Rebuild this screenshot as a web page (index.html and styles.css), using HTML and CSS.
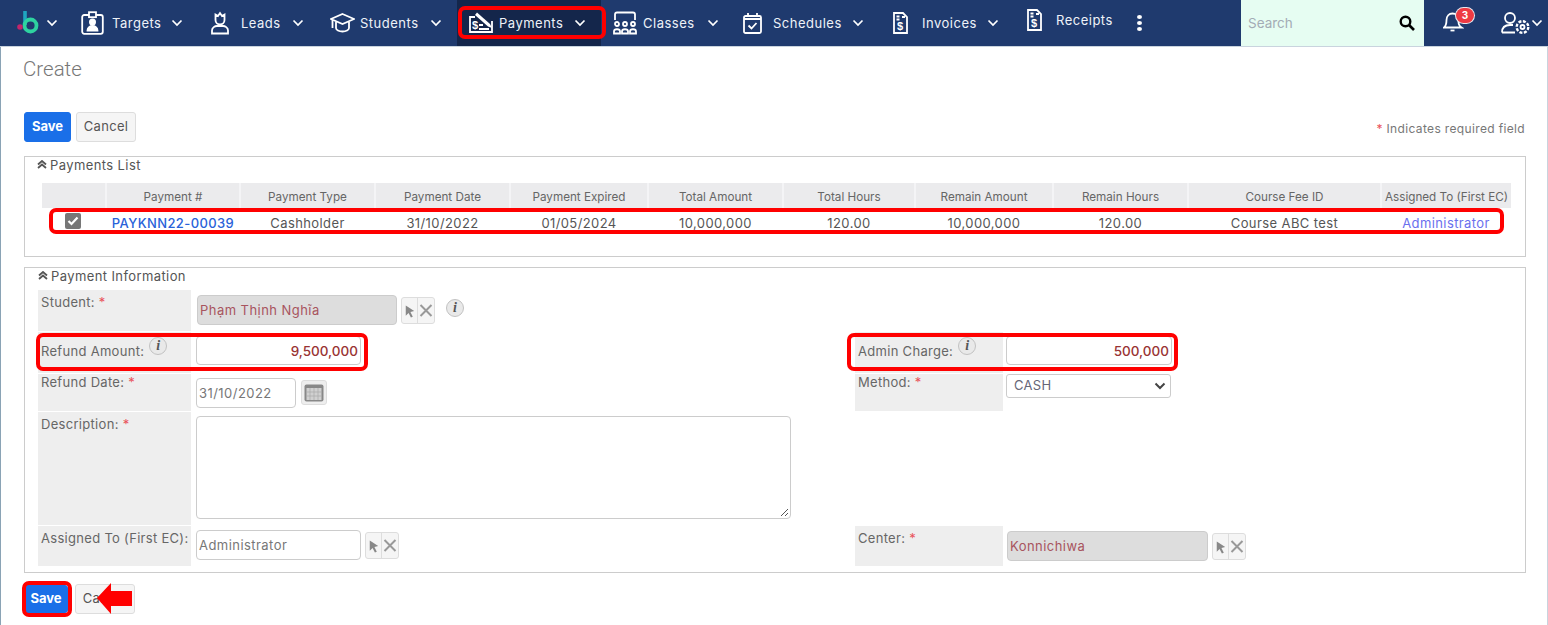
FILE: index.html
```html
<!DOCTYPE html>
<html lang="en">
<head>
    <meta charset="UTF-8">
    <title>Create Payment</title>
    <link rel="stylesheet" href="styles.css">
</head>
<body>
    <!-- top menu -->
    <header class="topbar">
        <div class="nav-cell nav-logo">
            <svg class="logo" width="22" height="24" viewBox="0 0 22 24"><path d="M8 1v14" stroke="#1fa5c0" stroke-width="3.600" fill="none"/><circle cx="13.500" cy="15.500" r="6" stroke="#2ed3a0" stroke-width="3.800" fill="none"/><circle cx="3" cy="17" r="2.800" fill="#c2256b"/></svg>
            <svg class="chev" viewBox="0 0 12 8"><path d="M1.500 1.500 6 6l4.500-4.500"/></svg>
        </div>
        <a class="nav-cell nav-targets">
            <svg class="ico" width="23" height="24" viewBox="0 0 23 24"><rect x="1.200" y="4" width="20.600" height="18.800" rx="2"/><rect x="8" y="1.200" width="7" height="5" fill="#1f3a6e"/><circle cx="11.500" cy="11" r="2.600" fill="#fff"/><path d="M6.500 19.500c0-6 10-6 10 0z" fill="#fff"/></svg>
            <span class="lbl">Targets</span>
            <svg class="chev" viewBox="0 0 12 8"><path d="M1.500 1.500 6 6l4.500-4.500"/></svg>
        </a>
        <a class="nav-cell nav-leads">
            <svg class="ico" width="20" height="24" viewBox="0 0 20 24"><path d="M5.500 3.500 8 5l2-3 2 3 2.500-1.500V9c0 6-9 6-9 0z"/><path d="M2 22.500v-3c0-3 3-4.500 5-4.500h6c2 0 5 1.500 5 4.500v3z"/></svg>
            <span class="lbl">Leads</span>
            <svg class="chev" viewBox="0 0 12 8"><path d="M1.500 1.500 6 6l4.500-4.500"/></svg>
        </a>
        <a class="nav-cell nav-students">
            <svg class="ico" width="25" height="22" viewBox="0 0 25 22"><path d="M12.500 2 24 7l-11.500 5L1 7z"/><path d="M6 10v6c0 2 3 3.500 6.500 3.500s6.500-1.500 6.500-3.500v-6"/><path d="M2.500 8v8"/></svg>
            <span class="lbl">Students</span>
            <svg class="chev" viewBox="0 0 12 8"><path d="M1.500 1.500 6 6l4.500-4.500"/></svg>
        </a>
        <a class="nav-cell nav-payments">
            <svg class="ico" width="24" height="24" viewBox="0 0 24 24"><path d="M6 6H1v15h22V10"/><path d="M8 1.500l13 11.500 2 4-4-1.500L6 4z" fill="#fff" stroke="none"/><text class="ico-sym" x="3" y="18">$</text><path d="M10 14h4M10 18h10"/></svg>
            <span class="lbl">Payments</span>
            <svg class="chev" viewBox="0 0 12 8"><path d="M1.500 1.500 6 6l4.500-4.500"/></svg>
        </a>
        <a class="nav-cell nav-classes">
            <svg class="ico" width="24" height="24" viewBox="0 0 24 24"><path d="M2 9V3.500Q2 1.500 4 1.500h16q2 0 2 2V9"/><circle cx="4" cy="13" r="2"/><circle cx="12" cy="13" r="2"/><circle cx="20" cy="13" r="2"/><path d="M1 22.500v-2c0-3 6-3 6 0v2zM9 22.500v-2c0-3 6-3 6 0v2zM17 22.500v-2c0-3 6-3 6 0v2z"/></svg>
            <span class="lbl">Classes</span>
            <svg class="chev" viewBox="0 0 12 8"><path d="M1.500 1.500 6 6l4.500-4.500"/></svg>
        </a>
        <a class="nav-cell nav-schedules">
            <svg class="ico" width="19" height="22" viewBox="0 0 19 22"><rect x="1" y="4" width="17" height="17" rx="1.500"/><path d="M5 1v4M14 1v4M1 7h17"/><path d="M5.500 13.500l3 3 5-5.500"/></svg>
            <span class="lbl">Schedules</span>
            <svg class="chev" viewBox="0 0 12 8"><path d="M1.500 1.500 6 6l4.500-4.500"/></svg>
        </a>
        <a class="nav-cell nav-invoices">
            <svg class="ico" width="15" height="22" viewBox="0 0 15 22"><path d="M1 1h9l4 4v16H1z"/><path d="M3.500 4.500h3M3.500 7.500h3M9 5h3"/><text class="ico-sym" x="4" y="18">$</text></svg>
            <span class="lbl">Invoices</span>
            <svg class="chev" viewBox="0 0 12 8"><path d="M1.500 1.500 6 6l4.500-4.500"/></svg>
        </a>
        <a class="nav-cell nav-receipts">
            <svg class="ico" width="15" height="22" viewBox="0 0 15 22"><path d="M1 1h9l4 4v16H1z"/><path d="M3.500 4.500h3M3.500 7.500h3M9 5h3"/><text class="ico-sym" x="4" y="18">$</text></svg>
            <span class="lbl">Receipts</span>
        </a>
        <div class="nav-cell nav-more"><span class="dot"></span><span class="dot"></span><span class="dot"></span></div>
        <div class="search">
            <span class="search-text">Search</span>
            <svg width="16" height="16" viewBox="0 0 16 16"><circle cx="6.500" cy="6.500" r="4.800" stroke="#000" stroke-width="2.400" fill="none"/><path d="M10 10l5 5" stroke="#000" stroke-width="2.600"/></svg>
        </div>
        <div class="nav-cell nav-bell">
            <svg class="ico" width="21" height="24" viewBox="0 0 21 24"><path d="M1 18.500c2.500-2 2.500-4 2.500-7.500 0-4 2.500-6.500 6-6.500s6 2.500 6 6.500c0 3.500 0 5.500 3 7.500z"/><path d="M7.500 21.500h4"/></svg>
            <span class="badge">3</span>
        </div>
        <div class="nav-cell nav-user">
            <svg class="ico ico-user" width="29" height="24" viewBox="0 0 29 24"><circle cx="9" cy="7" r="5"/><path d="M1 21.500c0-5 3-7.500 8-7.500h3M1 21.500h13"/><circle cx="21.500" cy="16" r="2"/><circle cx="21.500" cy="16" r="5.800" stroke-dasharray="3 1.500" stroke-width="2.400"/></svg>
            <svg class="chev" viewBox="0 0 12 8"><path d="M1.500 1.500 6 6l4.500-4.500"/></svg>
        </div>
    </header>

    <main class="content">
        <h1 class="page-title">Create</h1>

        <div class="toolbar">
            <button class="btn btn-save" type="button">Save</button>
            <button class="btn" type="button">Cancel</button>
            <span class="req-note"><span class="req">*</span> Indicates required field</span>
        </div>

        <section class="panel panel-list">
            <div class="panel-title">
                <svg class="fold" viewBox="0 0 10 9"><path d="M1 4.500 5 1l4 3.500M1 8l4-3.500L9 8"/></svg>
                Payments List
            </div>
            <table class="tabela">
                <colgroup>
                    <col class="c64"><col class="c134"><col class="c135"><col class="c135"><col class="c138"><col class="c135"><col class="c132"><col class="c138"><col class="c135"><col class="c193"><col class="c130">
                </colgroup>
                <thead>
                    <tr>
                        <th></th>
                        <th>Payment #</th>
                        <th>Payment Type</th>
                        <th>Payment Date</th>
                        <th>Payment Expired</th>
                        <th>Total Amount</th>
                        <th>Total Hours</th>
                        <th>Remain Amount</th>
                        <th>Remain Hours</th>
                        <th>Course Fee ID</th>
                        <th>Assigned To (First EC)</th>
                    </tr>
                </thead>
                <tbody>
                    <tr>
                        <td><span class="check"><svg width="12" height="10" viewBox="0 0 12 10"><path d="M1.500 5l3 3 6-6.500" stroke="#fff" stroke-width="2.200" fill="none"/></svg></span></td>
                        <td><a class="pay-link">PAYKNN22-00039</a></td>
                        <td>Cashholder</td>
                        <td>31/10/2022</td>
                        <td>01/05/2024</td>
                        <td>10,000,000</td>
                        <td>120.00</td>
                        <td>10,000,000</td>
                        <td>120.00</td>
                        <td>Course ABC test</td>
                        <td><a class="user-link">Administrator</a></td>
                    </tr>
                </tbody>
            </table>
        </section>

        <section class="panel panel-info">
            <div class="panel-title">
                <svg class="fold" viewBox="0 0 10 9"><path d="M1 4.500 5 1l4 3.500M1 8l4-3.500L9 8"/></svg>
                Payment Information
            </div>
            <div class="form-grid">
                <div class="lb">Student: <span class="req">*</span></div>
                <div class="fd fd-student">
                    <div class="inp inp-off w200">Phạm Thịnh Nghĩa</div>
                    <div class="pick">
                        <svg width="15" height="16" viewBox="0 0 16 16"><path d="M4 2l9 6-4 1 2.500 5-2 1L7 10l-3 3z" fill="#888"/></svg>
                        <svg width="16" height="16" viewBox="0 0 16 16"><path d="M2.500 2.500l11 11M13.500 2.500l-11 11" stroke="#999" stroke-width="2"/></svg>
                    </div>
                    <span class="info info-student">i</span>
                </div>
                <div class="lb"></div>
                <div class="fd"></div>

                <div class="lb lb-mid">Refund Amount:<span class="info info-label">i</span></div>
                <div class="fd fd-top">
                    <div class="inp inp-num w165">9,500,000</div>
                </div>
                <div class="lb lb-mid">Admin Charge:<span class="info info-label">i</span></div>
                <div class="fd fd-right fd-top">
                    <div class="inp inp-num w166">500,000</div>
                </div>

                <div class="lb lb-tight">Refund Date: <span class="req">*</span></div>
                <div class="fd fd-date">
                    <div class="inp w100">31/10/2022</div>
                    <span class="cal">
                        <svg width="20" height="18" viewBox="0 0 20 18"><rect x="0.500" y="0.500" width="19" height="17" rx="2" fill="#888"/><rect x="2.500" y="4" width="15" height="12" fill="#d0d0d0"/><path d="M6 4v12M10 4v12M14 4v12M2.500 8h15M2.500 12h15" stroke="#aaa" stroke-width="0.700"/></svg>
                    </span>
                </div>
                <div class="lb lb-tight">Method: <span class="req">*</span></div>
                <div class="fd fd-right fd-select">
                    <div class="select">CASH
                        <svg class="select-arrow" viewBox="0 0 12 8"><path d="M1.500 1.500 6 6l4.500-4.500"/></svg>
                    </div>
                </div>

                <div class="lb">Description: <span class="req">*</span></div>
                <div class="fd fd-desc">
                    <div class="textarea">
                        <svg class="grip" width="10" height="10" viewBox="0 0 10 10"><path d="M9 2 2 9M9 6 6 9" stroke="#555" stroke-width="1"/></svg>
                    </div>
                </div>
                <div class="blank"></div>
                <div class="blank"></div>

                <div class="lb">Assigned To (First EC):</div>
                <div class="fd fd-assign">
                    <div class="inp w165">Administrator</div>
                    <div class="pick pick-near">
                        <svg width="15" height="16" viewBox="0 0 16 16"><path d="M4 2l9 6-4 1 2.500 5-2 1L7 10l-3 3z" fill="#888"/></svg>
                        <svg width="16" height="16" viewBox="0 0 16 16"><path d="M2.500 2.500l11 11M13.500 2.500l-11 11" stroke="#999" stroke-width="2"/></svg>
                    </div>
                </div>
                <div class="lb">Center: <span class="req">*</span></div>
                <div class="fd fd-right fd-center">
                    <div class="inp inp-off w201">Konnichiwa</div>
                    <div class="pick">
                        <svg width="15" height="16" viewBox="0 0 16 16"><path d="M4 2l9 6-4 1 2.500 5-2 1L7 10l-3 3z" fill="#888"/></svg>
                        <svg width="16" height="16" viewBox="0 0 16 16"><path d="M2.500 2.500l11 11M13.500 2.500l-11 11" stroke="#999" stroke-width="2"/></svg>
                    </div>
                </div>
            </div>
        </section>

        <div class="toolbar toolbar-bottom">
            <button class="btn btn-save btn-small" type="button">Save</button>
            <button class="btn" type="button">Cancel</button>
        </div>
    </main>

    <!-- red marks drawn over the screenshot -->
    <div class="mark mark-menu"></div>
    <div class="mark mark-row"></div>
    <div class="mark mark-refund"></div>
    <div class="mark mark-admin"></div>
    <div class="mark mark-save"></div>
    <svg class="mark-arrow" width="36" height="32" viewBox="0 0 36 32"><path d="M0 15 14 0v8h21v15H14v8z" fill="#f00"/></svg>
</body>
</html>
```

FILE: styles.css
```css
* {
    box-sizing: border-box;
}

html, body {
    height: 625px;
    overflow: hidden;
}

body {
    margin: 0;
    background-color: #fff;
    font-family: Inter, "Liberation Sans", sans-serif;
    font-size: 13px;
    color: #666;
}

/* top menu */
.topbar {
    display: grid;
    grid-template-columns: 81px 129px 120px 127px 144px 142px 150px 134px 103px 111px 183px 70px 1fr;
    height: 47px;
    background-color: #1f3a6e;
    border-bottom: 1px solid #c9d4de;
    color: #fff;
}

.nav-cell {
    display: flex;
    align-items: center;
    font-size: 13px;
    letter-spacing: 0.5px;
    color: #eef2f8;
}

.ico {
    flex: none;
    fill: none;
    stroke: #fff;
    stroke-width: 1.800;
}

.ico-sym {
    font-family: "Liberation Sans", sans-serif;
    font-size: 11px;
    font-weight: bold;
    fill: #fff;
    stroke: none;
}

.chev {
    flex: none;
    width: 12px;
    height: 8px;
    fill: none;
    stroke: #fff;
    stroke-width: 1.700;
}

.nav-logo {
    padding-left: 17px;
}

.logo {
    margin-bottom: 3px;
}

.nav-logo .chev {
    margin-left: 7px;
}

.nav-targets .lbl { margin: 0 10px 0 8px; }
.nav-leads .lbl { margin: 0 11px 0 11px; }
.nav-students .lbl { margin: 0 11px 0 5px; }
.nav-payments .lbl { margin: 0 11px 0 6px; }
.nav-classes .lbl { margin: 0 12px 0 6px; }
.nav-schedules .lbl { margin: 0 10px 0 11px; }
.nav-invoices .lbl { margin: 0 10px 0 14px; }
.nav-receipts .lbl { margin: 0 0 0 14px; }

.nav-payments {
    padding-left: 12px;
    background-color: #14264b;
}

.nav-classes {
    padding-left: 12px;
}

.nav-receipts {
    padding-bottom: 6px;
}

.nav-more {
    flex-direction: column;
    justify-content: center;
    align-items: flex-start;
    gap: 2px;
    padding-left: 7px;
}

.dot {
    width: 5px;
    height: 4px;
    border-radius: 50%;
    background-color: #fff;
}

.search {
    display: flex;
    align-items: center;
    justify-content: space-between;
    padding: 0 9px 0 7px;
    background-color: #e6fdf2;
}

.search-text {
    font-size: 13.500px;
    color: #a3acb5;
}

.nav-bell {
    position: relative;
    padding: 0 0 4px 19px;
}

.badge {
    position: absolute;
    top: 8px;
    left: 32px;
    width: 18px;
    height: 15px;
    border-radius: 8px;
    background-color: #ee3a43;
    box-shadow: 0 0 0 1px #e8e8ee;
    color: #fff;
    font-size: 10px;
    font-weight: bold;
    line-height: 15px;
    text-align: center;
    letter-spacing: 0;
}

.nav-user {
    padding-left: 7px;
    gap: 1px;
}

/* page */
.content {
    height: 578px;
    padding: 0 21px 0 23px;
    border-left: 1px solid #8aa3b5;
    border-right: 1px solid #c9d4de;
}

.page-title {
    margin: 0 0 0 -1px;
    padding-top: 11px;
    font-size: 20.500px;
    font-weight: 300;
    line-height: 23px;
    color: #777;
    font-family: Roboto, sans-serif;
}

.toolbar {
    display: flex;
    align-items: center;
    gap: 5px;
    height: 30px;
    margin-top: 31px;
}

.btn {
    width: 60px;
    height: 30px;
    padding: 0 0 2px;
    border: 1px solid #ddd;
    border-radius: 3px;
    background-color: #f5f5f5;
    color: #555;
    font-family: Inter, sans-serif;
    font-size: 13px;
    letter-spacing: 0.300px;
}

.btn-save {
    width: 47px;
    border-color: #1a6fe8;
    background-color: #1a6fe8;
    color: #fff;
    font-weight: bold;
    letter-spacing: 0;
}

.btn-small {
    width: 44px;
    height: 28px;
    margin-right: 2px;
}

.req-note {
    margin-left: auto;
    padding: 2px 1px 0 0;
    font-size: 12px;
    letter-spacing: 0.350px;
    color: #777;
}

.req {
    color: #e9525a;
}

.panel {
    border: 1px solid #ccc;
    padding: 0 13px;
}

.panel-list {
    height: 101px;
    margin-top: 14px;
    padding-left: 17px;
}

.panel-info {
    height: 306px;
    margin-top: 10px;
}

.panel-title {
    display: flex;
    align-items: center;
    gap: 3px;
    height: 15px;
    font-size: 13px;
    letter-spacing: 0.400px;
    color: #555;
}

.fold {
    width: 10px;
    height: 9px;
    fill: none;
    stroke: #555;
    stroke-width: 1.800;
}

.panel-list .panel-title {
    margin-left: -5px;
}

/* list */
.tabela {
    width: 1469px;
    margin-top: 11px;
    border-collapse: collapse;
    table-layout: fixed;
}

.c64 { width: 64px; }
.c134 { width: 134px; }
.c135 { width: 135px; }
.c138 { width: 138px; }
.c132 { width: 132px; }
.c193 { width: 193px; }
.c130 { width: 130px; }

.tabela th {
    height: 25px;
    padding: 3px 0 0;
    border-right: 2px solid #f4f4f6;
    background-color: #ebebed;
    font-size: 11.700px;
    font-weight: 400;
    color: #666;
    text-align: center;
    white-space: nowrap;
}

.tabela th:last-child {
    border-right: none;
}

.tabela td {
    height: 29px;
    padding: 0;
    font-size: 13px;
    letter-spacing: 0.400px;
    color: #555;
    text-align: center;
    white-space: nowrap;
}

.check {
    display: inline-flex;
    align-items: center;
    justify-content: center;
    width: 16px;
    height: 16px;
    margin: 0 2px 4px 0;
    border-radius: 2px;
    background-color: #777;
    vertical-align: middle;
}

.pay-link {
    color: #2962d9;
    font-weight: 500;
}

.user-link {
    color: #6a70ee;
}

/* form */
.form-grid {
    display: grid;
    grid-template-columns: 153px 664px 148px 1fr;
    grid-template-rows: 41px 41px 37px 113px 40px;
    row-gap: 1px;
    margin-top: 7px;
}

.lb {
    padding: 4px 3px;
    background-color: #eeeeee;
    font-size: 13px;
    letter-spacing: 0.300px;
    color: #666;
    white-space: nowrap;
}

.lb:empty, .blank {
    background: none;
}

.lb-mid {
    display: flex;
    align-items: flex-start;
    padding-top: 11px;
}

.lb-tight {
    padding-top: 0;
}

.fd {
    display: flex;
    align-items: flex-start;
    padding-left: 5px;
}

.fd-right {
    padding-left: 3px;
}

.fd-student { padding-left: 6px; padding-top: 5px; }
.fd-top { padding-top: 4px; }
.fd-date { padding-top: 4px; }
.fd-select { padding-top: 0; }
.fd-desc { padding-top: 4px; }
.fd-assign { padding-top: 4px; }
.fd-center { padding: 5px 0 0 4px; }

.inp {
    display: flex;
    align-items: center;
    height: 30px;
    padding: 0 2px;
    border: 1px solid #ccc;
    border-radius: 4px;
    background-color: #fff;
    font-size: 13px;
    letter-spacing: 0.450px;
    color: #777;
    white-space: nowrap;
}

.inp-off {
    background-color: #dddddd;
    color: #a8545e;
}

.inp-num {
    justify-content: flex-end;
    height: 29px;
    font-size: 13.500px;
    font-weight: 500;
    letter-spacing: 0;
    color: #933;
}

.w100 { width: 100px; }
.w165 { width: 165px; }
.w166 { width: 166px; }
.w200 { width: 200px; }
.w201 { width: 201px; }

.pick {
    display: flex;
    align-items: center;
    justify-content: center;
    width: 34px;
    height: 27px;
    margin: 2px 0 0 4px;
    border: 1px solid #ddd;
    border-radius: 3px;
    background-color: #f5f5f5;
}

.pick svg + svg {
    border-left: 1px solid #ddd;
    height: 100%;
    width: 17px;
}

.info {
    display: inline-block;
    flex: none;
    width: 18px;
    height: 18px;
    border-radius: 50%;
    border: 1px solid #c2c2c2;
    background-color: #e9e9e9;
    font-family: "Liberation Serif", serif;
    font-size: 14px;
    font-style: italic;
    font-weight: bold;
    line-height: 16px;
    letter-spacing: 0;
    text-align: center;
    color: #555;
}

.info-student {
    margin: 4px 0 0 11px;
}

.info-label {
    margin: -6px 0 0 5px;
}

.cal {
    display: flex;
    align-items: center;
    justify-content: center;
    width: 26px;
    height: 25px;
    margin: 2px 0 0 5px;
    border: 1px solid #ddd;
    border-radius: 3px;
    background-color: #eee;
}

.select {
    position: relative;
    width: 165px;
    height: 24px;
    padding: 2px 7px;
    border: 1px solid #ccc;
    border-radius: 3px;
    font-size: 13px;
    letter-spacing: 0.300px;
    color: #667;
}

.select-arrow {
    position: absolute;
    top: 7px;
    right: 4px;
    width: 12px;
    height: 8px;
    fill: none;
    stroke: #444;
    stroke-width: 2;
}

.textarea {
    position: relative;
    width: 595px;
    height: 103px;
    border: 1px solid #ccc;
    border-radius: 4px;
}

.grip {
    position: absolute;
    right: 1px;
    bottom: 1px;
}

.toolbar-bottom {
    height: 29px;
    margin-top: 11px;
}

/* red marks */
.mark {
    position: absolute;
    border: 4px solid #f00;
    border-radius: 7px;
}

.mark-menu { left: 458px; top: 6px; width: 148px; height: 33px; }
.mark-row { left: 49px; top: 208px; width: 1455px; height: 26px; }
.mark-refund { left: 36px; top: 333px; width: 332px; height: 38px; }
.mark-admin { left: 847px; top: 333px; width: 331px; height: 38px; }
.mark-save { left: 22px; top: 581px; width: 50px; height: 36px; }

.mark-arrow {
    position: absolute;
    left: 97px;
    top: 583px;
}
```
